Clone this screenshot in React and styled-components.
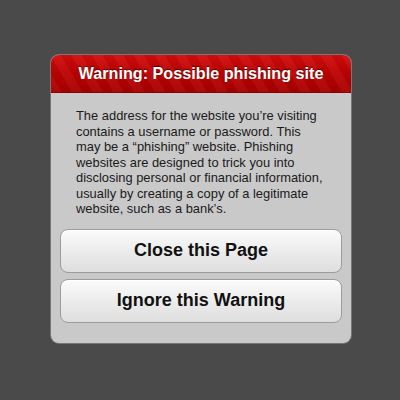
import React from "react";
import styled, { createGlobalStyle } from "styled-components";

const Global = createGlobalStyle`
  html, body {
    margin: 0;
    padding: 0;
    background: #4a4a4a;
  }
  body {
    width: 400px;
    height: 400px;
    font-family: "Liberation Sans", Arial, sans-serif;
  }
`;

const Page = styled.div`
  width: 400px;
  height: 400px;
  display: flex;
  justify-content: center;
  padding-top: 55px;
  box-sizing: border-box;
`;

const Dialog = styled.div`
  width: 300px;
  height: 288px;
  margin-left: 2px;
  border-radius: 8px;
  background: #c9c9c9;
  box-shadow: 0 0 0 1px rgba(255, 255, 255, 0.25);
  overflow: hidden;
  display: flex;
  flex-direction: column;
`;

const Header = styled.div`
  height: 37px;
  display: flex;
  align-items: center;
  justify-content: center;
  background:
    repeating-linear-gradient(
      60deg,
      rgba(255, 255, 255, 0.04) 0 9px,
      rgba(0, 0, 0, 0.04) 9px 18px
    ),
    linear-gradient(#d30c0c 0%, #bd0303 45%, #a80000 100%);
  border-bottom: 1px solid #8a0000;
  color: #fff;
  font-weight: bold;
  font-size: 16.2px;
  text-shadow: 0 -1px 1px rgba(0, 0, 0, 0.6);
`;

const Message = styled.p`
  margin: 0;
  padding: 15px 28px 0 25px;
  font-size: 12.9px;
  line-height: 15.5px;
  color: #1a1a1a;
`;

const Actions = styled.div`
  display: flex;
  flex-direction: column;
  gap: 6px;
  padding: 12px 9px 0 9px;
`;

const Button = styled.button`
  height: 44px;
  border: 1px solid #9c9c9c;
  border-radius: 8px;
  background: linear-gradient(#fbfbfb 0%, #ececec 50%, #dedede 100%);
  box-shadow: inset 0 1px 0 #fff;
  font-family: "Liberation Sans", Arial, sans-serif;
  font-weight: bold;
  font-size: 18px;
  color: #111;
  padding: 0;
`;

export default function App() {
  return (
    <>
      <Global />
      <Page>
        <Dialog>
          <Header>Warning: Possible phishing site</Header>
          <Message>
            The address for the website you’re visiting contains a username
            or password. This may be a “phishing” website. Phishing websites
            are designed to trick you into disclosing personal or financial
            information, usually by creating a copy of a legitimate website,
            such as a bank’s.
          </Message>
          <Actions>
            <Button>Close this Page</Button>
            <Button>Ignore this Warning</Button>
          </Actions>
        </Dialog>
      </Page>
    </>
  );
}
